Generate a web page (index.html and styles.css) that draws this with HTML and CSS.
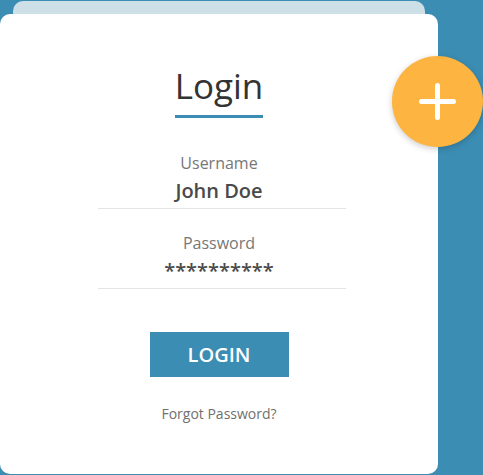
FILE: index.html
```html
<!DOCTYPE html>
<html lang="en">
<head>
    <meta charset="UTF-8">
    <meta name="viewport" content="width=device-width, initial-scale=1.0">
    <title>Login</title>
    <link rel="stylesheet" href="styles.css">
</head>
<body>
    <div class="stack">
        <!-- card peeking out behind -->
        <div class="card-back"></div>

        <div class="card">
            <h1 class="title">Login</h1>

            <div class="field">
                <label class="field-label">Username</label>
                <div class="field-value">John Doe</div>
            </div>

            <div class="field">
                <label class="field-label">Password</label>
                <div class="field-value">**********</div>
            </div>

            <button class="login-btn">LOGIN</button>

            <a class="forgot" href="#">Forgot Password?</a>

            <!-- Add button -->
            <button class="fab" aria-label="Add">
                <svg width="37" height="37" viewBox="0 0 37 37">
                    <line x1="2.5" y1="18.5" x2="34.5" y2="18.5" stroke="#fff" stroke-width="5" stroke-linecap="round"/>
                    <line x1="18.5" y1="2.5" x2="18.5" y2="34.5" stroke="#fff" stroke-width="5" stroke-linecap="round"/>
                </svg>
            </button>
        </div>
    </div>
</body>
</html>
```

FILE: styles.css
```css
* {
    margin: 0;
    padding: 0;
    box-sizing: border-box;
}

body {
    font-family: "Open Sans", Arial, sans-serif;
    background-color: #3c8db3;
    overflow: hidden;
}

.stack {
    padding-top: 1px;
}

.card-back {
    width: 412px;
    height: 13px;
    margin-left: 13px;
    background-color: #cde0e8;
    border-radius: 10px 10px 0 0;
}

.card {
    position: relative;
    width: 438px;
    height: 460px;
    padding-top: 52px;
    background-color: #fff;
    border-radius: 10px;
    display: flex;
    flex-direction: column;
    align-items: center;
}

.title {
    font-size: 35px;
    font-weight: 400;
    line-height: 40px;
    color: #333;
    padding-bottom: 9px;
    border-bottom: 3px solid #3c8db3;
    margin-bottom: 35px;
}

.field {
    align-self: flex-start;
    width: 248px;
    margin-left: 98px;
    padding-right: 6px;
    padding-bottom: 5px;
    border-bottom: 1px solid #e4e4e4;
    text-align: center;
    margin-bottom: 24px;
}

.field-label {
    display: block;
    font-size: 16px;
    line-height: 20px;
    color: #777;
    margin-bottom: 6px;
}

.field-value {
    font-size: 20px;
    font-weight: 600;
    line-height: 24px;
    color: #4a4a4a;
}

.login-btn {
    margin-top: 19px;
    width: 139px;
    height: 45px;
    border: none;
    background-color: #3c8db3;
    color: #fff;
    font-family: inherit;
    font-size: 20px;
    font-weight: 600;
    line-height: 45px;
    cursor: pointer;
}

.forgot {
    margin-top: 27px;
    font-size: 14px;
    line-height: 20px;
    color: #707070;
    text-decoration: none;
}

.fab {
    position: absolute;
    left: 392px;
    top: 42px;
    width: 91px;
    height: 91px;
    border: none;
    border-radius: 50%;
    background-color: #fdb441;
    box-shadow: 0 2px 6px rgba(0, 0, 0, 0.2);
    display: flex;
    align-items: center;
    justify-content: center;
    cursor: pointer;
}
```
